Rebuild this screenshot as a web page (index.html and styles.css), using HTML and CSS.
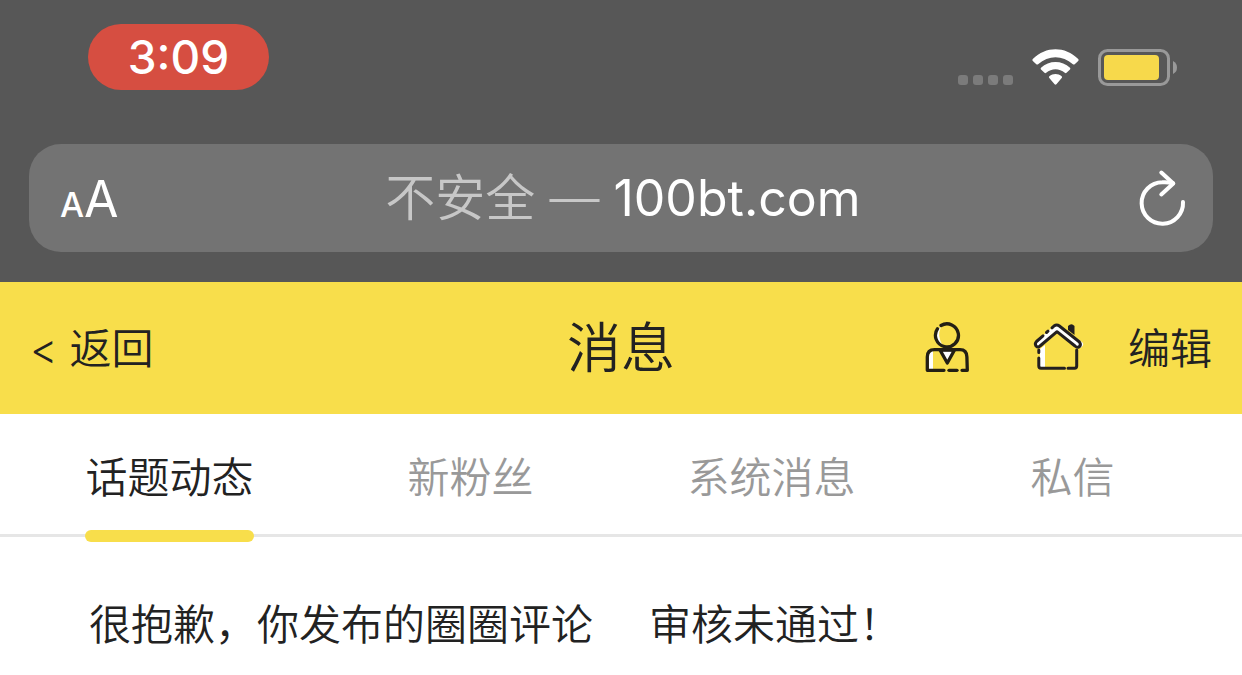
FILE: index.html
```
<!DOCTYPE html>
<html lang="zh-CN">
<head>
    <meta charset="UTF-8">
    <meta name="viewport" content="width=device-width, initial-scale=1.0">
    <title>消息</title>
    <link rel="stylesheet" href="styles.css">
</head>
<body>
<div class="browser">
  <!-- Status bar: clock, signal, wifi, battery -->
  <div class="status">
    <div class="clock">3:09</div>
    <div class="status-icons">
      <svg class="signal" viewBox="0 0 56 12" fill="#7b7b7b">
        <rect x="0" y="0" width="10" height="10" rx="3"/>
        <rect x="15" y="0" width="10" height="10" rx="3"/>
        <rect x="30" y="0" width="10" height="10" rx="3"/>
        <rect x="45" y="0" width="10" height="10" rx="3"/>
      </svg>
      <svg class="wifi" viewBox="0 0 48 38" fill="#fff">
        <path d="M.8 10C14-3 33-3 46.200 10Q47 11 46.200 12L42.700 15.200Q41.800 16 40.900 15.200C30.500 5.800 16.500 5.800 6.100 15.200Q5.200 16 4.300 15.200L.8 12Q0 11 .8 10Z"/>
        <path d="M9 18.800C17 11 30 11 38 18.800Q38.800 19.700 38 20.600L34.500 23.800Q33.700 24.500 32.800 23.800C27.500 19 19.500 19 14.200 23.800Q13.300 24.500 12.500 23.800L9 20.600Q8.200 19.700 9 18.800Z"/>
        <path d="M17.300 27.200C21 24.200 26 24.200 29.700 27.200Q30.500 28.100 29.700 29L24.400 35.300Q23.500 36.200 22.600 35.300L17.300 29Q16.500 28.100 17.300 27.200Z"/>
      </svg>
      <svg class="battery" viewBox="0 0 80 38">
        <rect x="1.500" y="1.500" width="69" height="34" rx="8" fill="none" stroke="#999" stroke-width="3"/>
        <rect x="6" y="6" width="55" height="25" rx="4" fill="#f7d94b"/>
        <path d="M75 12Q79 14 79 18.500T75 25Z" fill="#999"/>
      </svg>
    </div>
  </div>

  <!-- Address bar -->
  <div class="address-bar">
    <button class="text-size" aria-label="文字大小"><span class="small-a">A</span><span>A</span></button>
    <button class="address"><span class="insecure">不安全 —</span> 100bt.com</button>
    <button class="reload" aria-label="刷新">
      <svg viewBox="0 0 48 60" fill="none" stroke="#fff" stroke-width="4" stroke-linecap="round" stroke-linejoin="round">
        <path d="M45 34A20.700 20.700 0 1 1 24.300 14.300Q29 13.800 35 15.300"/>
        <path d="M23.300 4.500L35.300 15.500L23.300 26.500"/>
      </svg>
    </button>
  </div>
</div>

<header class="header">
  <a href="#" class="back"><span>&lt;</span>返回</a>
  <h1>消息</h1>
  <div class="actions">
    <a href="#" class="icon" aria-label="个人中心">
      <svg viewBox="0 1 50 54" fill="none" stroke="#231f14" stroke-width="3.300" stroke-linecap="round" stroke-linejoin="round">
        <path d="M7 48V35Q7 31 11 30V48Z" fill="#fff" stroke="none"/>
        <path d="M19 6A11 11 0 0 0 21 25Q14.500 15 19 6Z" fill="#fff" stroke="none"/>
        <path d="M19 4.500A11.500 11.500 0 1 1 15.500 7.800"/>
        <path d="M18 29L25.300 42L32.500 29Z" fill="#fff"/>
        <path d="M22 49.300H5.300V36Q5.300 28.700 12.500 28.700H38Q44.700 28.700 44.900 36L45.300 49.300H40"/>
        <path d="M27 49.300H35"/>
      </svg>
    </a>
    <a href="#" class="icon" aria-label="首页">
      <svg viewBox="0 1 54 54" fill="none" stroke="#231f20" stroke-width="3" stroke-linecap="round" stroke-linejoin="round">
        <path d="M8 28L13 24V46H8ZM46 18L51 22Q52 25 48 27Z" fill="#fff" stroke="none"/>
        <path d="M36 5Q39.500 1.500 42.500 5V14L36 9Z" fill="#231f20" stroke="none"/>
        <path d="M4.500 20.500L22 5Q24.700 3 27.400 5L47.500 21Q49.500 24 47 26Q45 27 43 25L25 10.700L8 25Q6 27 4 25Q2.500 22.500 4.500 20.500Z" fill="#fff" stroke="none"/>
        <path d="M20 6.800L22 5Q24.700 3 27.400 5L47.500 21Q49.500 24 47 26Q45 27 43 25L25 10.700L8 25Q6 27 4 25Q2.500 22.500 4.500 20.500L11 14.800M14.500 11.500L16 10.200"/>
        <path d="M6.800 29V31.500M6.800 37V45Q6.800 47.200 9 47.200H32.500M36 47.200H42.500Q44.700 47.200 44.700 45V29"/>
      </svg>
    </a>
    <button class="edit">编辑</button>
  </div>
</header>

<nav class="tabs">
  <a href="#" class="tab active">话题动态</a>
  <a href="#" class="tab">新粉丝</a>
  <a href="#" class="tab">系统消息</a>
  <a href="#" class="tab">私信</a>
</nav>

<main class="messages">
  <p class="message"><span>很抱歉，你发布的圈圈评论</span><span>审核未通过！</span></p>
</main>
</body>
</html>
```
FILE: styles.css
```
* {
    box-sizing: border-box;
}
body {
    margin: 0;
    background-color: white;
    color: #222;
    font-family: Inter, "Noto Sans CJK SC", sans-serif;
    font-size: 42px;
    font-weight: 350;
    line-height: 60px;
}
a {
    color: inherit;
    text-decoration: none;
}
button {
    padding: 0;
    border: 0;
    background: none;
    color: inherit;
    font: inherit;
    cursor: pointer;
}
svg {
    display: block;
}

/* browser chrome */
.browser {
    background-color: #575757;
    color: white;
    padding: 24px 29px 30px;
}
.status {
    display: flex;
    justify-content: space-between;
    padding: 0 35px 0 59px;
    margin-bottom: 54px;
}
.clock {
    width: 181px;
    border-radius: 33px;
    background-color: #d64e41;
    font-size: 46px;
    font-weight: 500;
    line-height: 66px;
    text-align: center;
}
.status-icons {
    display: flex;
    align-items: flex-end;
    gap: 18px;
    padding-bottom: 3px;
}
.signal {
    width: 56px;
    height: 12px;
}
.wifi {
    width: 48px;
    height: 38px;
}
.battery {
    width: 80px;
    height: 38px;
}
.address-bar {
    display: grid;
    grid-template-columns: 60px 1fr 60px;
    align-items: center;
    height: 108px;
    padding: 0 27px 0 31px;
    border-radius: 32px;
    background-color: #737373;
}
.text-size {
    display: flex;
    align-items: baseline;
    padding-top: 8px;
    font-size: 50px;
    font-weight: 400;
}
.small-a {
    font-size: 34px;
    font-weight: 500;
}
.address {
    font-size: 50px;
    font-weight: 400;
}
.insecure {
    color: #c7c7c7;
    font-weight: 350;
}
.reload {
    justify-self: end;
}
.reload svg {
    width: 48px;
    height: 60px;
}

/* page header */
.header {
    display: grid;
    grid-template-columns: 1fr auto 1fr;
    align-items: center;
    height: 132px;
    padding: 2px 30px 0;
    background-color: #f8de4b;
}
.back {
    display: flex;
    align-items: center;
    gap: 12px;
}
.header h1 {
    margin: 0;
    font-size: 54px;
    font-weight: 350;
}
.actions {
    display: flex;
    align-items: center;
    justify-content: flex-end;
}
.icon {
    margin-right: 42px;
}
.icon svg {
    height: 54px;
}
.icon:first-child {
    margin-right: 60px;
}

/* tabs */
.tabs {
    display: grid;
    grid-template-columns: repeat(4, 1fr);
    justify-items: center;
    height: 123px;
    padding: 0 19px;
    border-bottom: 3px solid #e6e6e6;
    color: #999;
}
.tab {
    position: relative;
    line-height: 128px;
}
.active {
    color: #222;
}
.active::after {
    content: "";
    position: absolute;
    left: 0;
    right: 0;
    top: 116px;
    height: 12px;
    border-radius: 6px;
    background-color: #f8de4b;
}

.messages {
    padding: 58px 89px 16px;
}
.message {
    display: flex;
    gap: 56px;
    margin: 0;
}
```
